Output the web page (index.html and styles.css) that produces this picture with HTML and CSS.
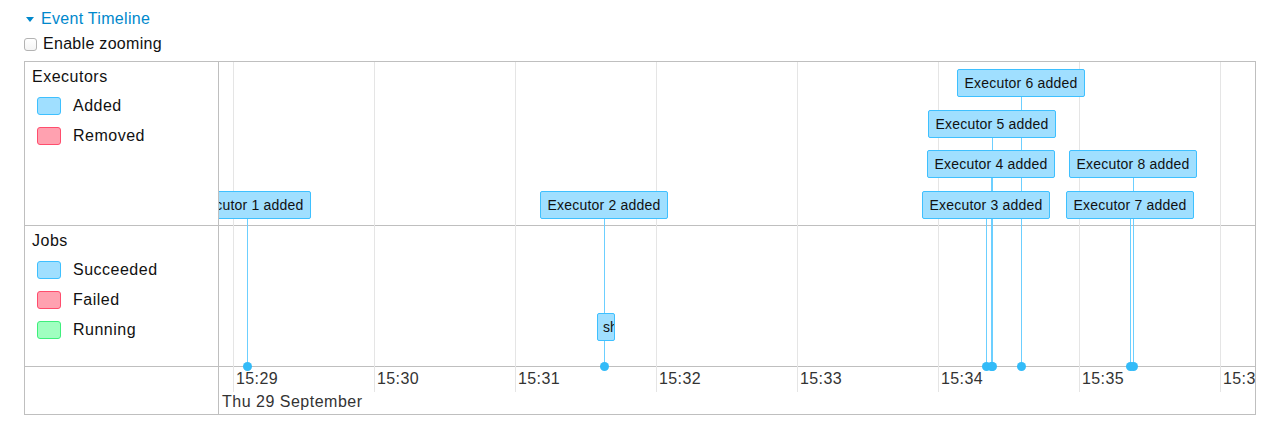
FILE: index.html
```html
<!DOCTYPE html>
<html>
<head>
<meta charset="utf-8">
<title>Event Timeline</title>
<link rel="stylesheet" href="styles.css">
</head>
<body>
<div class="page">
  <div class="section-title"><span class="caret"></span><span class="title-link">Event Timeline</span></div>
  <label class="zoom-toggle"><span class="checkbox"></span>Enable zooming</label>

  <div class="timeline">
    <div class="legend-col">
      <div class="legend-cell legend-exec">
        <div class="legend-title">Executors</div>
        <div class="legend-row"><span class="swatch added"></span>Added</div>
        <div class="legend-row"><span class="swatch removed"></span>Removed</div>
      </div>
      <div class="legend-cell legend-jobs">
        <div class="legend-title">Jobs</div>
        <div class="legend-row"><span class="swatch added"></span>Succeeded</div>
        <div class="legend-row"><span class="swatch removed"></span>Failed</div>
        <div class="legend-row"><span class="swatch running"></span>Running</div>
      </div>
      <div class="legend-cell legend-axis"></div>
    </div>

    <div class="canvas">
      <div class="band band-exec"></div>
      <div class="band band-jobs"></div>
      <div class="band band-axis"></div>

      <div class="grid-line" style="left:14px"></div>
      <div class="grid-line" style="left:155px"></div>
      <div class="grid-line" style="left:296px"></div>
      <div class="grid-line" style="left:437px"></div>
      <div class="grid-line" style="left:578px"></div>
      <div class="grid-line" style="left:719px"></div>
      <div class="grid-line" style="left:860px"></div>
      <div class="grid-line" style="left:1001px"></div>

      <div class="tick-label" style="left:17px">15:29</div>
      <div class="tick-label" style="left:158px">15:30</div>
      <div class="tick-label" style="left:299px">15:31</div>
      <div class="tick-label" style="left:440px">15:32</div>
      <div class="tick-label" style="left:581px">15:33</div>
      <div class="tick-label" style="left:722px">15:34</div>
      <div class="tick-label" style="left:863px">15:35</div>
      <div class="tick-label" style="left:1004px">15:36</div>
      <div class="major-label">Thu 29 September</div>

      <!-- connector lines -->
      <div class="item-line" style="left:28px;top:157px;height:147px"></div>
      <div class="item-line" style="left:385px;top:157px;height:147px"></div>
      <div class="item-line" style="left:767px;top:157px;height:147px"></div>
      <div class="item-line" style="left:772px;top:116px;height:188px"></div>
      <div class="item-line" style="left:773px;top:76px;height:228px"></div>
      <div class="item-line" style="left:802px;top:35px;height:269px"></div>
      <div class="item-line" style="left:911px;top:157px;height:147px"></div>
      <div class="item-line" style="left:914px;top:116px;height:188px"></div>

      <!-- axis dots -->
      <div class="item-dot" style="left:24px"></div>
      <div class="item-dot" style="left:381px"></div>
      <div class="item-dot" style="left:763px"></div>
      <div class="item-dot" style="left:768px"></div>
      <div class="item-dot" style="left:769px"></div>
      <div class="item-dot" style="left:798px"></div>
      <div class="item-dot" style="left:907px"></div>
      <div class="item-dot" style="left:910px"></div>

      <!-- job range -->
      <div class="job-box" style="left:378px;top:251px">show at &lt;console&gt;:26</div>

      <!-- executor boxes -->
      <div class="item-box" style="left:-36px;top:129px">Executor 1 added</div>
      <div class="item-box" style="left:321px;top:129px">Executor 2 added</div>
      <div class="item-box" style="left:738px;top:7px">Executor 6 added</div>
      <div class="item-box" style="left:709px;top:48px">Executor 5 added</div>
      <div class="item-box" style="left:708px;top:88px">Executor 4 added</div>
      <div class="item-box" style="left:703px;top:129px">Executor 3 added</div>
      <div class="item-box" style="left:850px;top:88px">Executor 8 added</div>
      <div class="item-box" style="left:847px;top:129px">Executor 7 added</div>
    </div>
  </div>
</div>
</body>
</html>
```

FILE: styles.css
```css
* {
  box-sizing: border-box;
}

body {
  margin: 0;
  background: #ffffff;
  font-family: "Liberation Sans", Arial, Helvetica, sans-serif;
  color: #111111;
}

.page {
  padding: 9px 0 0 24px;
}

.section-title {
  display: flex;
  align-items: center;
  gap: 7px;
  height: 20px;
  padding-left: 2px;
  font-size: 16px;
  line-height: 20px;
  letter-spacing: 0.3px;
  color: #0088cc;
}

.caret {
  width: 0;
  height: 0;
  margin-top: 1px;
  border-left: 4.5px solid transparent;
  border-right: 4.5px solid transparent;
  border-top: 5px solid #0088cc;
}

.zoom-toggle {
  display: flex;
  align-items: center;
  height: 20px;
  margin-top: 5px;
  font-size: 16px;
  line-height: 20px;
  letter-spacing: 0.3px;
  color: #111111;
}

.checkbox {
  width: 13px;
  height: 13px;
  margin-right: 6px;
  border: 1px solid #b3b3b3;
  border-radius: 3px;
  background: linear-gradient(#ffffff, #f4f4f4);
}

.timeline {
  display: grid;
  grid-template-columns: 194px 1fr;
  width: 1232px;
  height: 354px;
  margin-top: 7px;
  border: 1px solid #bfbfbf;
}

.legend-col {
  display: flex;
  flex-direction: column;
  border-right: 1px solid #bfbfbf;
}

.legend-cell {
  padding: 5px 0 0 7px;
  font-size: 16px;
  letter-spacing: 0.5px;
  color: #111111;
}

.legend-exec {
  height: 164px;
  border-bottom: 1px solid #bfbfbf;
}

.legend-jobs {
  height: 141px;
  border-bottom: 1px solid #bfbfbf;
}

.legend-axis {
  flex: 1;
}

.legend-title {
  line-height: 20px;
  margin-bottom: 4px;
}

.legend-row {
  display: flex;
  align-items: center;
  gap: 12px;
  height: 30px;
  padding-left: 5px;
}

.swatch {
  width: 24px;
  height: 18px;
  border-radius: 3px;
  border: 1px solid;
}

.swatch.added {
  background: #a0dfff;
  border-color: #3ec0ff;
}

.swatch.removed {
  background: #ffa1b0;
  border-color: #ff4d6d;
}

.swatch.running {
  background: #a0ffc0;
  border-color: #3eef7c;
}

.canvas {
  position: relative;
  overflow: hidden;
  display: flex;
  flex-direction: column;
}

.band-exec {
  height: 164px;
  border-bottom: 1px solid #bfbfbf;
}

.band-jobs {
  height: 141px;
  border-bottom: 1px solid #bfbfbf;
}

.band-axis {
  flex: 1;
}

.grid-line {
  position: absolute;
  top: 0;
  width: 1px;
  height: 330px;
  background: #e5e5e5;
}

.tick-label {
  position: absolute;
  top: 307px;
  font-size: 16px;
  line-height: 20px;
  letter-spacing: 0.4px;
  color: #333333;
  white-space: nowrap;
}

.major-label {
  position: absolute;
  left: 3px;
  top: 330px;
  font-size: 16px;
  line-height: 20px;
  letter-spacing: 0.5px;
  color: #333333;
  white-space: nowrap;
}

.item-line {
  position: absolute;
  width: 1px;
  background: #6ccfff;
}

.item-dot {
  position: absolute;
  top: 300px;
  width: 9px;
  height: 9px;
  border-radius: 50%;
  background: #33bbf8;
}

.item-box {
  position: absolute;
  width: 128px;
  height: 28px;
  border: 1px solid #3ec0ff;
  border-radius: 2px;
  background: #a0dfff;
  color: #111111;
  font-size: 14px;
  line-height: 26px;
  letter-spacing: 0.2px;
  text-align: center;
  white-space: nowrap;
  overflow: hidden;
}

.job-box {
  position: absolute;
  width: 18px;
  height: 28px;
  padding-left: 5px;
  border: 1px solid #3ec0ff;
  border-radius: 2px;
  background: #a0dfff;
  color: #111111;
  font-size: 14px;
  line-height: 26px;
  white-space: nowrap;
  overflow: hidden;
}
```
